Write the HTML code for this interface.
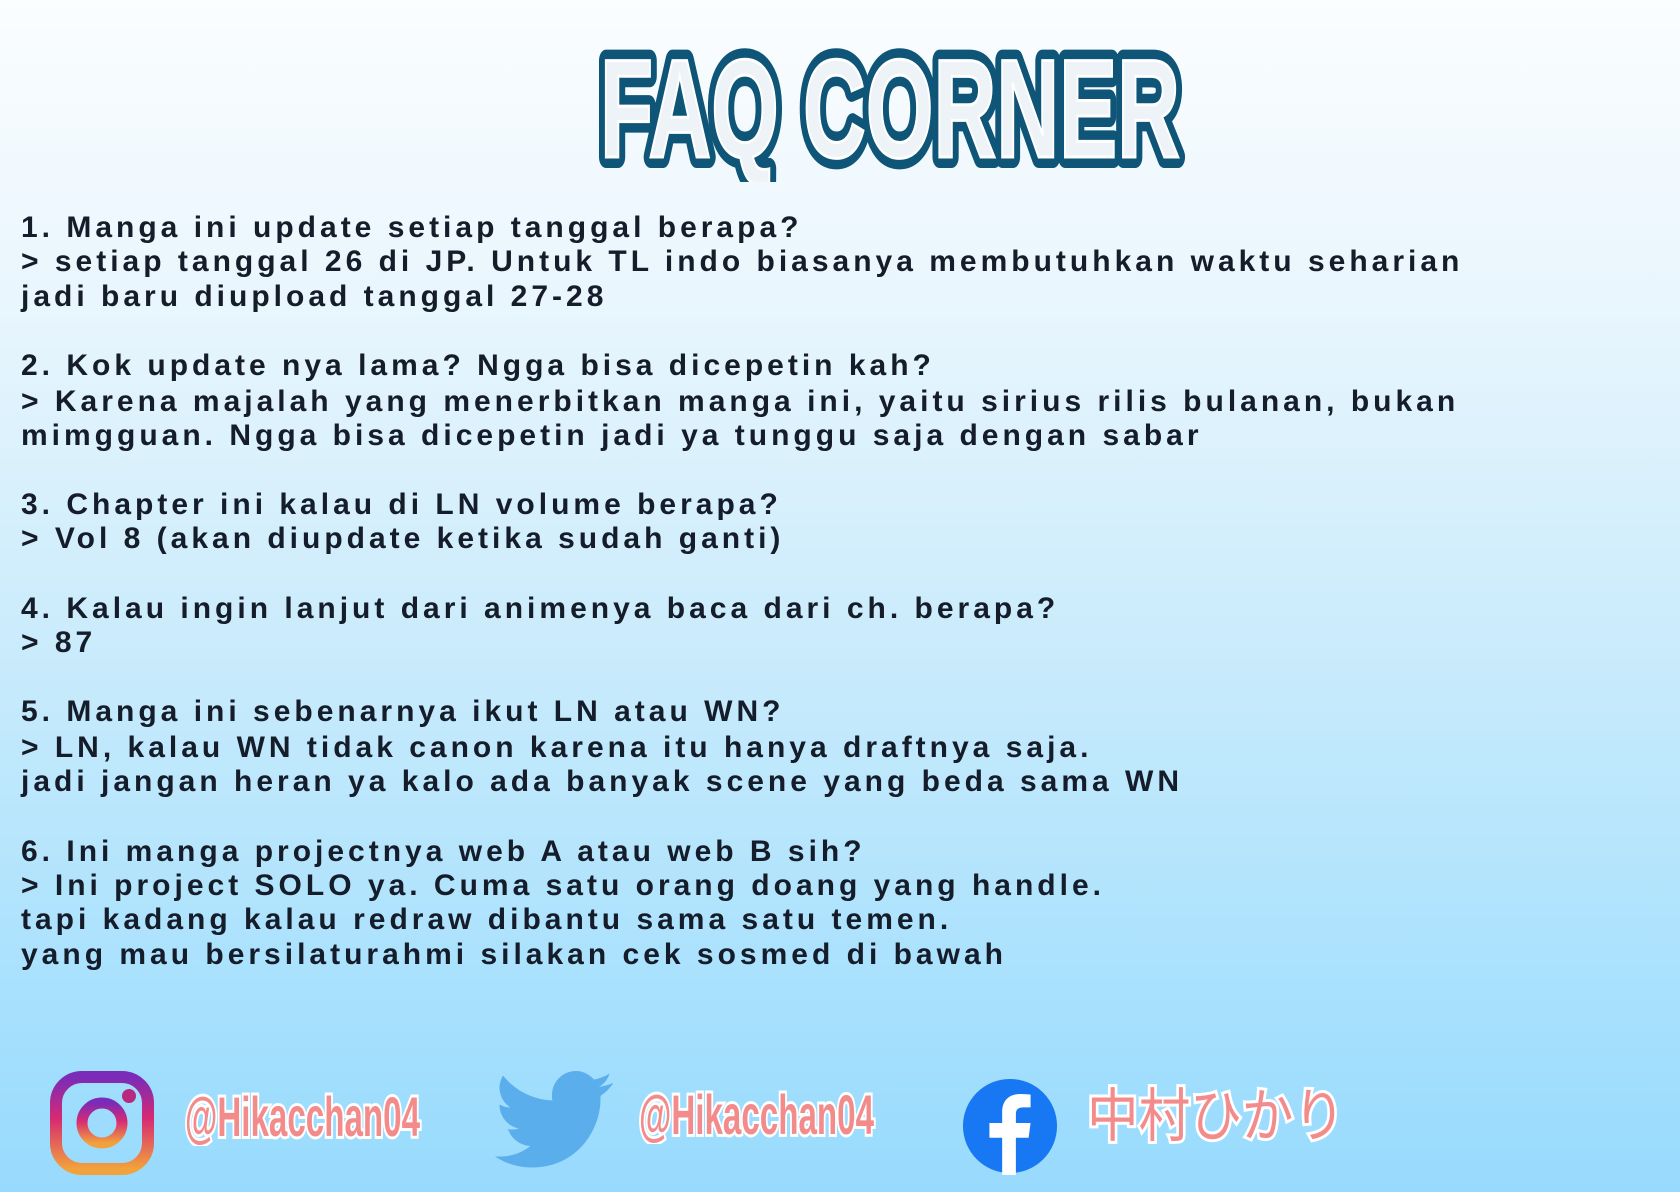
<!DOCTYPE html>
<html><head><meta charset="utf-8"><style>
html,body{margin:0;padding:0}
body{width:1680px;height:1192px;overflow:hidden;position:relative;background:linear-gradient(180deg,#fbfdff 0%,#e9f6fd 25%,#c9ebfc 55%,#a6e0fd 85%,#98dafd 100%);font-family:"Liberation Sans",sans-serif}
.t{position:absolute;left:21px;font-size:30px;letter-spacing:4px;color:#151c2a;white-space:pre;line-height:1;font-weight:bold}
svg{position:absolute}
</style></head><body>
<svg style="left:570px;top:22px" width="640" height="160" viewBox="0 0 640 160">
<text x="320" y="135" text-anchor="middle" textLength="580" lengthAdjust="spacingAndGlyphs" font-family="Liberation Sans Narrow, Liberation Sans, sans-serif" font-weight="bold" font-size="140" fill="#0f5577" stroke="#0f5577" stroke-width="22" stroke-linejoin="round">FAQ CORNER</text>
<text x="320" y="135" text-anchor="middle" textLength="580" lengthAdjust="spacingAndGlyphs" font-family="Liberation Sans Narrow, Liberation Sans, sans-serif" font-weight="bold" font-size="140" fill="#eef3f7" stroke="#ffffff" stroke-width="3">FAQ CORNER</text>
</svg>
<div class="t" style="top:213px">1. Manga ini update setiap tanggal berapa?</div>
<div class="t" style="top:247px">&gt; setiap tanggal 26 di JP. Untuk TL indo biasanya membutuhkan waktu seharian</div>
<div class="t" style="top:282px">jadi baru diupload tanggal 27-28</div>
<div class="t" style="top:351px">2. Kok update nya lama? Ngga bisa dicepetin kah?</div>
<div class="t" style="top:387px">&gt; Karena majalah yang menerbitkan manga ini, yaitu sirius rilis bulanan, bukan</div>
<div class="t" style="top:421px">mimgguan. Ngga bisa dicepetin jadi ya tunggu saja dengan sabar</div>
<div class="t" style="top:490px">3. Chapter ini kalau di LN volume berapa?</div>
<div class="t" style="top:524px">&gt; Vol 8 (akan diupdate ketika sudah ganti)</div>
<div class="t" style="top:594px">4. Kalau ingin lanjut dari animenya baca dari ch. berapa?</div>
<div class="t" style="top:628px">&gt; 87</div>
<div class="t" style="top:697px">5. Manga ini sebenarnya ikut LN atau WN?</div>
<div class="t" style="top:733px">&gt; LN, kalau WN tidak canon karena itu hanya draftnya saja.</div>
<div class="t" style="top:767px">jadi jangan heran ya kalo ada banyak scene yang beda sama WN</div>
<div class="t" style="top:837px">6. Ini manga projectnya web A atau web B sih?</div>
<div class="t" style="top:871px">&gt; Ini project SOLO ya. Cuma satu orang doang yang handle.</div>
<div class="t" style="top:905px">tapi kadang kalau redraw dibantu sama satu temen.</div>
<div class="t" style="top:940px">yang mau bersilaturahmi silakan cek sosmed di bawah</div>

<svg style="left:50px;top:1071px" width="104" height="104" viewBox="0 0 104 104">
<defs><linearGradient id="ig" x1="0" y1="0" x2="0" y2="1"><stop offset="0" stop-color="#7a2bb8"/><stop offset=".45" stop-color="#d62a73"/><stop offset="1" stop-color="#f2a23c"/></linearGradient></defs>
<rect x="6" y="6" width="92" height="92" rx="26" fill="none" stroke="url(#ig)" stroke-width="12"/>
<circle cx="52" cy="52" r="20" fill="none" stroke="url(#ig)" stroke-width="11"/>
<circle cx="79" cy="25" r="7" fill="#b8287e"/>
</svg>
<svg style="left:180px;top:1082px" width="250" height="64">
<text x="5" y="54" textLength="235" lengthAdjust="spacingAndGlyphs" font-family="Liberation Sans Narrow, Liberation Sans, sans-serif" font-weight="bold" font-size="56" fill="#f48b8b" stroke="#fff" stroke-width="6" paint-order="stroke">@Hikacchan04</text></svg>
<svg style="left:495px;top:1071px" width="120" height="100" viewBox="0 0 24 20">
<path fill="#5aaeeb" d="M23.6 2.4c-.9.4-1.8.6-2.8.8 1-.6 1.8-1.6 2.1-2.7-.9.6-2 1-3.1 1.2C18.9.7 17.6 0 16.2 0c-2.7 0-4.8 2.2-4.8 4.8 0 .4 0 .8.1 1.1C7.4 5.7 3.9 3.8 1.6.9c-.4.7-.7 1.6-.7 2.4 0 1.7.9 3.2 2.2 4-.8 0-1.5-.2-2.200-.6v.1c0 2.3 1.7 4.3 3.9 4.7-.4.1-.8.2-1.3.2-.3 0-.6 0-.9-.1.6 1.9 2.4 3.3 4.5 3.4-1.7 1.3-3.7 2.1-6 2.1H0c2.1 1.4 4.7 2.2 7.4 2.2 8.9 0 13.7-7.4 13.7-13.7v-.6c1-.7 1.8-1.500 2.5-2.5z"/></svg>
<svg style="left:634px;top:1080px" width="250" height="64">
<text x="5" y="54" textLength="235" lengthAdjust="spacingAndGlyphs" font-family="Liberation Sans Narrow, Liberation Sans, sans-serif" font-weight="bold" font-size="56" fill="#f48b8b" stroke="#fff" stroke-width="6" paint-order="stroke">@Hikacchan04</text></svg>
<svg style="left:961px;top:1077px" width="98" height="98" viewBox="0 0 100 100">
<circle cx="50" cy="50" r="48" fill="#1877f2"/>
<path fill="#fff" d="M56 100V62h13l2-15H56v-9c0-4 1.5-7 7.5-7H71V18c-1.5-.2-6-.6-11-.6-11 0-18 6.5-18 18.5V47H29v15h13v38z"/></svg>
<svg style="left:1082px;top:1080px" width="270" height="70">
<text x="5" y="56" textLength="258" lengthAdjust="spacingAndGlyphs" font-family="Noto Sans CJK JP, sans-serif" font-size="58" fill="#f48b8b" stroke="#fff" stroke-width="6" paint-order="stroke">中村ひかり</text></svg>
</body></html>
